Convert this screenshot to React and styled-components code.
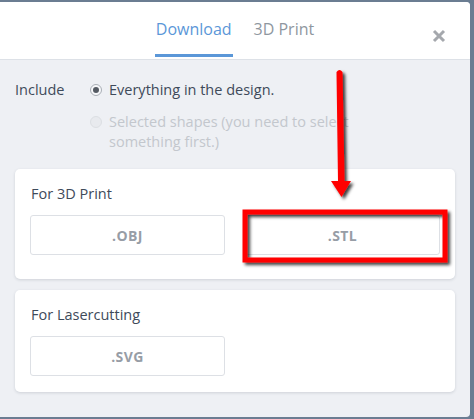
import React from "react";
import styled, { createGlobalStyle } from "styled-components";

const Global = createGlobalStyle`
  html, body { margin: 0; padding: 0; }
  body {
    background: #6b7d92;
    font-family: "Open Sans", "Noto Sans", sans-serif;
    width: 474px;
    height: 419px;
    overflow: hidden;
  }
`;

const Dialog = styled.div`
  position: relative;
  margin-top: 2px;
  width: 470px;
  height: 415px;
  background: #eef0f4;
  border-radius: 0 4px 4px 0;
  overflow: hidden;
  display: flex;
  flex-direction: column;
`;

const Header = styled.div`
  position: relative;
  height: 57px;
  background: #ffffff;
  border-bottom: 1px solid #dde1e7;
  display: flex;
  justify-content: center;
  gap: 20px;
`;

const Tab = styled.div`
  display: flex;
  align-items: center;
  padding-top: 2px;
  font-size: 16px;
  color: ${(p) => (p.$active ? "#5b97d8" : "#8f979f")};
  border-bottom: 3px solid ${(p) => (p.$active ? "#5b97d8" : "transparent")};
  margin-bottom: -1px;
  height: 55px;
  box-sizing: border-box;
  padding-left: 1px;
  padding-right: 1px;
`;

const Close = styled.div`
  position: absolute;
  right: 24px;
  top: 24px;
  width: 14px;
  height: 14px;
`;

const Body = styled.div`
  padding: 20px 15px 0 15px;
  display: flex;
  flex-direction: column;
`;

const IncludeRow = styled.div`
  display: flex;
`;

const Label = styled.div`
  width: 75px;
  font-size: 14.5px;
  line-height: 20px;
  color: #3e4a5a;
`;

const Options = styled.div`
  display: flex;
  flex-direction: column;
  gap: 12px;
`;

const Option = styled.div`
  display: flex;
  align-items: flex-start;
  gap: 7px;
  font-size: 14.5px;
  line-height: 20px;
  color: ${(p) => (p.$disabled ? "#c3c7cd" : "#3e4a5a")};
  width: 262px;
`;

const Radio = styled.span`
  flex: none;
  margin-top: 4px;
  width: 12px;
  height: 12px;
  box-sizing: border-box;
  border-radius: 50%;
  border: 1px solid ${(p) => (p.$disabled ? "#dcdfe3" : "#a9aeb5")};
  background: ${(p) => (p.$disabled ? "#e8eaee" : "#f7f8fa")};
  display: flex;
  align-items: center;
  justify-content: center;
  &::after {
    content: "";
    width: 6px;
    height: 6px;
    border-radius: 50%;
    background: ${(p) => (p.$checked ? "#555b63" : "transparent")};
  }
`;

const Cards = styled.div`
  margin-top: 17px;
  display: flex;
  flex-direction: column;
  gap: 11px;
`;

const Card = styled.div`
  background: #ffffff;
  border-radius: 5px;
  box-shadow: 0 1px 3px rgba(60, 70, 90, 0.18);
  padding: 15px 15px ${(p) => p.$bottom}px 15px;
`;

const CardTitle = styled.div`
  padding-left: 1px;
  font-size: 14.5px;
  line-height: 20px;
  color: #3e4a5a;
`;

const ButtonGrid = styled.div`
  margin-top: 11px;
  display: grid;
  grid-template-columns: 1fr 1fr;
  gap: 20px;
`;

const FileButton = styled.div`
  height: 40px;
  box-sizing: border-box;
  border: 1px solid #dde0e5;
  border-radius: 3px;
  background: #fff;
  display: flex;
  align-items: center;
  justify-content: center;
  font-size: 14px;
  font-weight: 700;
  color: #979da6;
  letter-spacing: 0.4px;
`;

const Overlay = styled.svg`
  position: absolute;
  left: 0;
  top: -2px;
  pointer-events: none;
`;

export default function App() {
  return (
    <>
      <Global />
      <Dialog>
        <Header>
          <Tab $active>Download</Tab>
          <Tab>3D Print</Tab>
          <Close>
            <svg width="14" height="14" viewBox="0 0 14 14">
              <path d="M2 2 L12 12 M12 2 L2 12" stroke="#a5a8ad" strokeWidth="3" strokeLinecap="butt" />
            </svg>
          </Close>
        </Header>
        <Body>
          <IncludeRow>
            <Label>Include</Label>
            <Options>
              <Option>
                <Radio $checked />
                <span>Everything in the design.</span>
              </Option>
              <Option $disabled>
                <Radio $disabled />
                <span>Selected shapes (you need to select something first.)</span>
              </Option>
            </Options>
          </IncludeRow>
          <Cards>
            <Card $bottom={24}>
              <CardTitle>For 3D Print</CardTitle>
              <ButtonGrid>
                <FileButton>.OBJ</FileButton>
                <FileButton>.STL</FileButton>
              </ButtonGrid>
            </Card>
            <Card $bottom={16}>
              <CardTitle>For Lasercutting</CardTitle>
              <ButtonGrid>
                <FileButton>.SVG</FileButton>
              </ButtonGrid>
            </Card>
          </Cards>
        </Body>
        <Overlay width="474" height="419" viewBox="0 0 474 419">
          <defs>
            <filter id="sh" x="-20%" y="-20%" width="140%" height="140%">
              <feDropShadow dx="2.5" dy="2.5" stdDeviation="1.5" floodColor="#000" floodOpacity="0.75" />
            </filter>
          </defs>
          <g filter="url(#sh)">
            <rect x="245" y="212" width="200" height="48" fill="none" stroke="#ff0000" strokeWidth="5" />
            <path d="M336.5 72 Q339.5 68 342.5 72 L344.5 181 L351 181 L341.5 197 L331 181 L338 181 Z" fill="#ff0000" />
          </g>
        </Overlay>
      </Dialog>
    </>
  );
}
